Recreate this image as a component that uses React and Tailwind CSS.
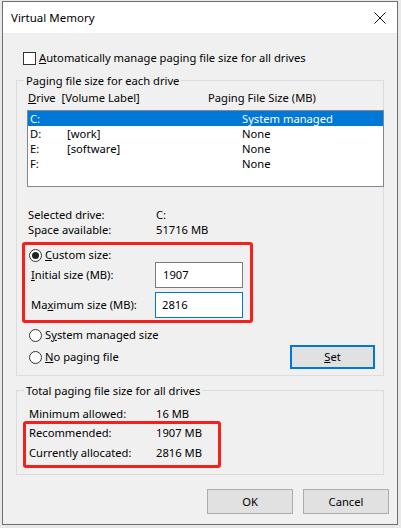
import React from 'react';

const font = { fontFamily: '"Noto Sans", "Open Sans", sans-serif' };

const Radio = ({ checked, children }) => (
  <div className="flex items-center h-[14px]">
    <span className="w-[13px] h-[13px] shrink-0 rounded-full border border-[#333] bg-white flex items-center justify-center">
      {checked && <span className="w-[7px] h-[7px] rounded-full bg-[#222]" />}
    </span>
    <span className="ml-[3px] leading-[14px]">{children}</span>
  </div>
);

const Group = ({ label, className, children }) => (
  <div className={`relative border border-[#dcdcdc] ${className}`}>
    <span className="absolute -top-[8px] left-[7px] px-[2px] bg-[#f0f0f0] leading-[15px]">{label}</span>
    {children}
  </div>
);

const drives = [
  { d: 'C:', label: '', size: 'System managed', sel: true },
  { d: 'D:', label: '[work]', size: 'None' },
  { d: 'E:', label: '[software]', size: 'None' },
  { d: 'F:', label: '', size: 'None' },
];

export default function App() {
  return (
    <div className="w-[401px] h-[528px] bg-[#e9e9e9] pl-[2px] pt-[1px] text-[11.2px] leading-[14px] text-black" style={font}>
      <div className="w-[396px] h-[524px] border border-[#6f6f6f] bg-[#f0f0f0] flex flex-col">
        {/* Title bar */}
        <div className="h-[31px] bg-white flex items-center justify-between pl-[8px] pr-[11px] shrink-0">
          <span className="text-[11.5px]">Virtual Memory</span>
          <svg width="12" height="12" viewBox="0 0 12 12">
            <path d="M0.5 0.5 L11.5 11.5 M11.5 0.5 L0.5 11.5" stroke="#111" strokeWidth="1" fill="none" />
          </svg>
        </div>

        {/* Auto manage checkbox */}
        <div className="flex items-center h-[14px] mt-[18px] ml-[20px]">
          <span className="w-[13px] h-[13px] border border-[#333] bg-white" />
          <span className="ml-[3px]"><u>A</u>utomatically manage paging file size for all drives</span>
        </div>

        {/* Paging file size for each drive */}
        <Group label="Paging file size for each drive" className="ml-[13px] mt-[15px] w-[368px] h-[296px]">
          <div className="pt-[9px] pl-[10px]">
            <div className="flex h-[15px] items-center pl-[1px]">
              <span className="w-[180px]"><u>D</u>rive&nbsp; [Volume Label]</span>
              <span>Paging File Size (MB)</span>
            </div>
            <div className="mt-[5px] w-[357px] h-[77px] border border-[#828790] bg-white">
              {drives.map((r) => (
                <div
                  key={r.d}
                  className={`flex h-[15px] items-center pl-[2px] ${r.sel ? 'bg-[#0078d7] text-white' : ''}`}
                >
                  <span className="w-[37px]">{r.d}</span>
                  <span className="w-[175px]">{r.label}</span>
                  <span>{r.size}</span>
                </div>
              ))}
            </div>

            <div className="mt-[20px] flex h-[15px] items-center pl-[1px]">
              <span className="w-[128px]">Selected drive:</span>
              <span>C:</span>
            </div>
            <div className="flex h-[15px] items-center pl-[1px]">
              <span className="w-[128px]">Space available:</span>
              <span>51716 MB</span>
            </div>

            {/* Custom size (highlighted) */}
            <div className="mt-[5px] -ml-[5px] w-[231px] h-[81px] border-[3px] border-[#f5201b] rounded-[3px] pl-[4px] pt-[3px]">
              <Radio checked><u>C</u>ustom size:</Radio>
              <div className="flex items-center h-[26px] pl-[2px]">
                <span className="w-[124px]"><u>I</u>nitial size (MB):</span>
                <div className="w-[88px] h-[26px] border border-[#7a7a7a] bg-white flex items-center pl-[7px]">1907</div>
              </div>
              <div className="flex items-center h-[26px] mt-[4px] pl-[2px]">
                <span className="w-[124px]">Ma<u>x</u>imum size (MB):</span>
                <div className="w-[88px] h-[26px] border border-[#0078d7] bg-white flex items-center pl-[6px]">2816</div>
              </div>
            </div>

            <div className="flex mt-[5px] pr-[8px]">
              <div className="flex flex-col gap-[8px] ml-[2px]">
                <Radio>S<u>y</u>stem managed size</Radio>
                <Radio><u>N</u>o paging file</Radio>
              </div>
              <button className="ml-auto mt-[17px] w-[85px] h-[24px] bg-[#e1e1e1] border-2 border-[#0078d7] flex items-center justify-center">
                <span><u>S</u>et</span>
              </button>
            </div>
          </div>
        </Group>

        {/* Totals */}
        <Group label="Total paging file size for all drives" className="ml-[13px] mt-[14px] w-[368px] h-[85px]">
          <div className="pt-[15px] pl-[12px]">
            <div className="flex h-[15px] items-center">
              <span className="w-[127px]">Minimum allowed:</span>
              <span>16 MB</span>
            </div>
            <div className="-ml-[6px] w-[198px] h-[47px] border-[3px] border-[#f5201b] rounded-[3px] pl-[3px] pt-[1px]">
              <div className="flex h-[15px] items-center">
                <span className="w-[127px]">Recommended:</span>
                <span>1907 MB</span>
              </div>
              <div className="flex h-[15px] items-center mt-[5px]">
                <span className="w-[127px]">Currently allocated:</span>
                <span>2816 MB</span>
              </div>
            </div>
          </div>
        </Group>

        {/* Buttons */}
        <div className="flex justify-end gap-[10px] mt-[14px] pr-[8px]">
          <button className="w-[86px] h-[25px] bg-[#e1e1e1] border border-[#adadad]">OK</button>
          <button className="w-[86px] h-[25px] bg-[#e1e1e1] border border-[#adadad]">Cancel</button>
        </div>
      </div>
    </div>
  );
}
